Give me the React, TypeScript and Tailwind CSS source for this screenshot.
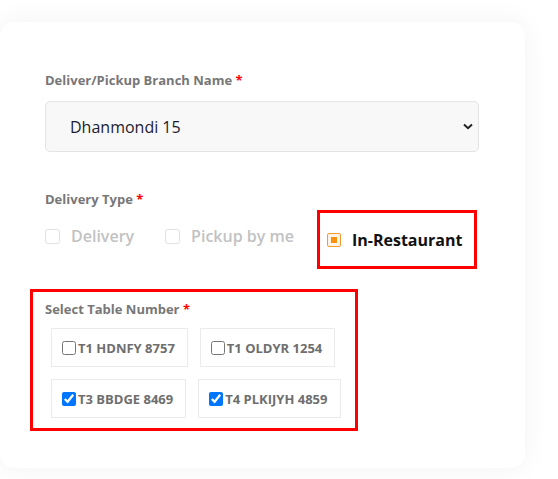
import React from "react";

const font = { fontFamily: '"Open Sans", "Noto Sans", sans-serif' };

function Label({ children }: { children: React.ReactNode }) {
  return (
    <div className="text-[13px] font-bold leading-[18px] text-[#777777]">
      {children} <span className="text-[#ff0000]">*</span>
    </div>
  );
}

function FadedOption({ label }: { label: string }) {
  return (
    <div className="flex items-center pt-[14px] leading-[24px]">
      <span className="w-[15px] h-[15px] rounded-[3px] border border-[#e2e2e2] bg-white" />
      <span className="ml-[11px] text-[16px] font-semibold text-[#c2c2c2]">{label}</span>
    </div>
  );
}

function TableCell({ label, checked }: { label: string; checked: boolean }) {
  return (
    <label className="flex h-[39px] items-center border border-[#ebebeb] bg-white pl-[10px] pr-[12px]">
      <input
        type="checkbox"
        defaultChecked={checked}
        className="m-0 mr-[2px] h-[14px] w-[14px]"
      />
      <span className="text-[13px] font-bold leading-[18px] text-[#6e6e6e]">{label}</span>
    </label>
  );
}

export default function App() {
  return (
    <div className="min-h-[479px] w-[558px] bg-white" style={font}>
      <div className="pt-[22px]">
        <div className="w-[525px] h-[446px] rounded-[14px] bg-white shadow-[0_0_28px_rgba(0,0,0,0.055)] pl-[45px] pr-[46px] pt-[49px]">
          <Label>Deliver/Pickup Branch Name</Label>
          <div className="mt-[12px] flex h-[51px] items-center justify-between rounded-[5px] border border-[#e4e4e4] bg-[#f8f8f8] pl-[24px] pr-[4px]">
            <span className="text-[16px] text-[#1c1c30]">Dhanmondi 15</span>
            <svg width="10" height="7" viewBox="0 0 10 7" className="mr-[1px]">
              <path d="M1 1.5 L5 5.2 L9 1.5" fill="none" stroke="#222" strokeWidth="2" />
            </svg>
          </div>

          <div className="mt-[38px]">
            <Label>Delivery Type</Label>
          </div>
          <div className="mt-[2px] flex items-start">
            <FadedOption label="Delivery" />
            <div className="ml-[31px]">
              <FadedOption label="Pickup by me" />
            </div>
            <div className="ml-[23px] flex h-[59px] w-[160px] items-center border-[3px] border-[#ff0000] pl-[7px]">
              <span className="flex h-[14px] w-[14px] items-center justify-center rounded-[2px] border-[1.5px] border-[#f59a2c] bg-[#fff4e6]">
                <span className="h-[6px] w-[6px] bg-[#f7900f]" />
              </span>
              <span className="ml-[11px] text-[16px] font-bold leading-[24px] text-[#111111]">In-Restaurant</span>
            </div>
          </div>

          <div className="-ml-[15px] mt-[20px] w-[328px] border-[3px] border-[#ff0000] pl-[12px] pt-[8px] pb-[10px]">
            <Label>Select Table Number</Label>
            <div className="mt-[10px] flex flex-wrap gap-[12px] pl-[6px]">
              <TableCell label="T1 HDNFY 8757" checked={false} />
              <TableCell label="T1 OLDYR 1254" checked={false} />
              <TableCell label="T3 BBDGE 8469" checked={true} />
              <TableCell label="T4 PLKIJYH 4859" checked={true} />
            </div>
          </div>
        </div>
      </div>
    </div>
  );
}
